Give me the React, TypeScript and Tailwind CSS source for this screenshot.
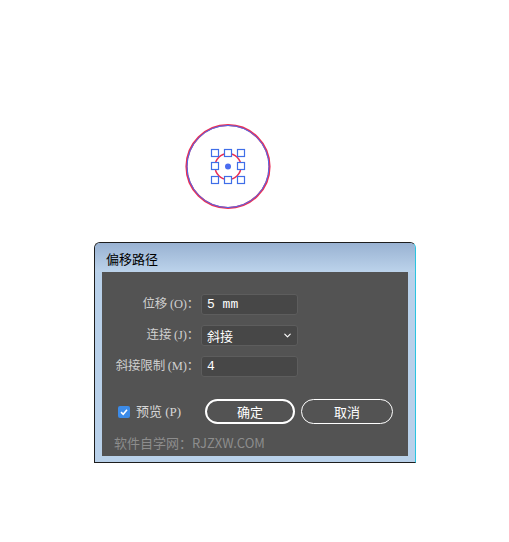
import { ChevronDown } from "lucide-react";

const cjk = { fontFamily: '"Noto Sans CJK SC", "Noto Sans", sans-serif' };
const serifCjk = { fontFamily: '"Liberation Serif", "Noto Sans CJK SC", serif' };

function Handle({ x, y }: { x: number; y: number }) {
  return <rect x={x - 3.5} y={y - 3.5} width={7} height={7} fill="#fff" stroke="#3f6ee8" strokeWidth={1.2} />;
}

function Artboard() {
  const pts = [
    [215, 153], [228, 153], [241, 153],
    [215, 166], [241, 166],
    [215, 180], [228, 180], [241, 180],
  ];
  return (
    <div className="h-[242px] w-full">
      <svg width={509} height={242} className="block">
        <circle cx={228} cy={166.5} r={41.5} fill="none" stroke="#ec2f55" strokeWidth={2.2} />
        <circle cx={228} cy={166.5} r={41} fill="none" stroke="#4a6cf0" strokeWidth={1} />
        <circle cx={228} cy={166.5} r={13} fill="none" stroke="#ec2f55" strokeWidth={1.5} />
        {pts.map(([x, y], i) => (
          <Handle key={i} x={x} y={y} />
        ))}
        <circle cx={228} cy={166.5} r={3} fill="#4a6cf0" />
      </svg>
    </div>
  );
}

function Row({ label, children }: { label: string; children: React.ReactNode }) {
  return (
    <div className="flex items-center h-[21px]">
      <div className="w-[99px] text-right text-[12.5px] text-[#cfcfcf] pr-[2px] tracking-[-0.2px]" style={serifCjk}>
        {label}
      </div>
      {children}
    </div>
  );
}

export default function App() {
  return (
    <div className="w-[509px] h-[542px] bg-white overflow-hidden">
      <Artboard />

      {/* Dialog */}
      <div className="ml-[94px] w-[322px] h-[221px] border border-[#1d1d1d] border-r-[#2ac4e0] rounded-t-[6px] bg-[#b9d1ea] flex flex-col">
        <div
          className="h-[29px] rounded-t-[5px] bg-gradient-to-b from-[#99b2d2] to-[#bcd3eb] px-[11px] pt-[3px] flex items-center text-[13px] text-black"
          style={cjk}
        >
          偏移路径
        </div>

        <div className="mx-[7px] h-[184px] bg-[#535353] flex flex-col pt-[22px]">
          <div className="flex flex-col gap-[10px]">
            <Row label="位移 (O)：">
              <div className="w-[97px] h-[21px] rounded-[3px] bg-[#474747] border border-[#5d5d5d] px-[5px] flex items-center text-[13px] text-white font-['Liberation_Mono',monospace]">
                5 mm
              </div>
            </Row>
            <Row label="连接 (J)：">
              <div className="w-[97px] h-[21px] rounded-[3px] bg-[#474747] border border-[#5d5d5d] pl-[5px] pr-[4px] flex items-center justify-between text-[13px] text-white" style={cjk}>
                <span>斜接</span>
                <ChevronDown className="w-[11px] h-[11px] text-white" strokeWidth={2.5} />
              </div>
            </Row>
            <Row label="斜接限制 (M)：">
              <div className="w-[97px] h-[21px] rounded-[3px] bg-[#474747] border border-[#5d5d5d] px-[5px] flex items-center text-[13px] text-white font-['Liberation_Mono',monospace]">
                4
              </div>
            </Row>
          </div>

          <div className="flex items-center mt-[22px] pl-[16px] h-[25px]">
            <div className="w-[12px] h-[12px] rounded-[2px] bg-[#3c8be8] flex items-center justify-center">
              <svg width={10} height={10} viewBox="0 0 10 10">
                <path d="M2 5.2 L4.2 7.3 L8 2.8" fill="none" stroke="#fff" strokeWidth={1.6} />
              </svg>
            </div>
            <span className="ml-[6px] text-[13px] text-[#d6d6d6] w-[69px]" style={serifCjk}>
              预览 (P)
            </span>
            <button className="w-[90px] h-[25px] rounded-full border-2 border-white text-[13px] text-white" style={cjk}>
              确定
            </button>
            <button className="ml-[6px] w-[92px] h-[25px] rounded-full border-[1.5px] border-white text-[13px] text-white" style={cjk}>
              取消
            </button>
          </div>

          <div className="mt-[9px] pl-[12px] text-[13px] text-[#8d8d8d]" style={cjk}>
            软件自学网：RJZXW.COM
          </div>
        </div>
      </div>
    </div>
  );
}
